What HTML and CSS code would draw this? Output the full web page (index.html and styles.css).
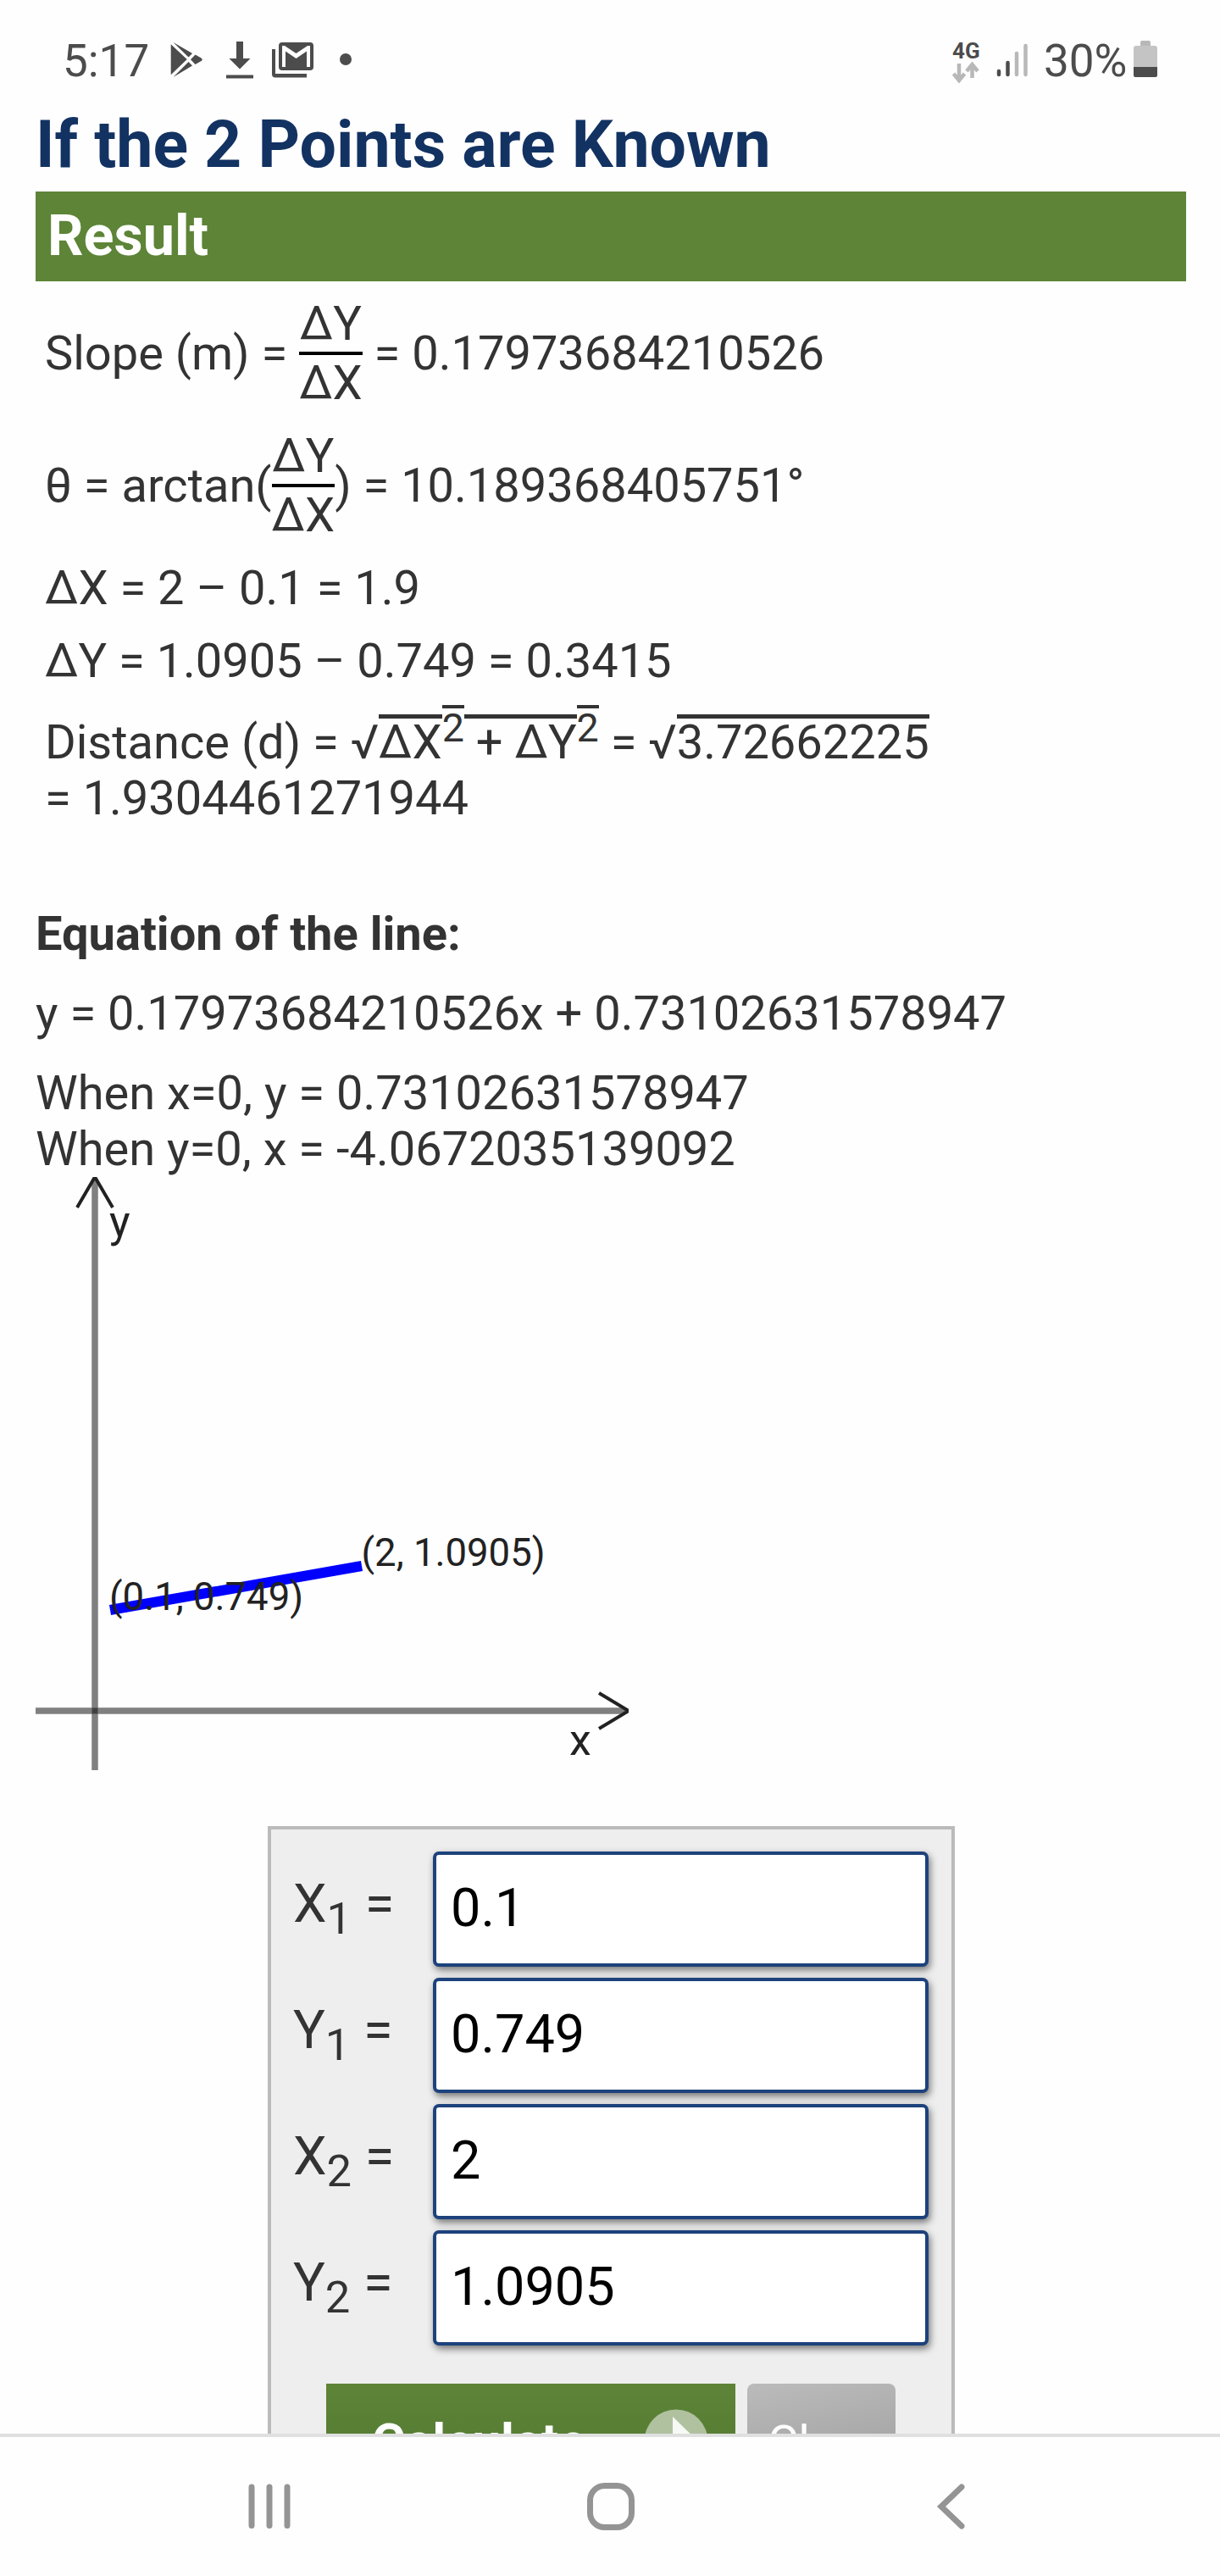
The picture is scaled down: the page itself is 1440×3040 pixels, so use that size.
FILE: index.html
```html
<!DOCTYPE html>
<html lang="en">
<head>
<meta charset="utf-8">
<title>Slope Calculator</title>
<link rel="stylesheet" href="styles.css">
</head>
<body>
<div class="screen">
  <header class="status">
    <div class="status-left">
      <span class="clock">5:17</span>
      <svg class="notif" width="230" height="60" viewBox="0 0 230 60" fill="#4c4c4c">
        <path d="M11.700 11.300V47.300L30.700 29zM14.500 9L32.500 26.500L37 22zM14.500 50L32.500 32L37 36.500zM40.500 23.500L47.500 27.500Q50 29.300 47.500 31L40.500 35L35 29.300z"/>
        <path d="M89 8h8v20h8.500L93 40.500 80.500 28H89zM77 47.500h32v4H77z"/>
        <path d="M131 17h4v29h37v4.500h-37q-4 0-4-4z"/>
        <path fill-rule="evenodd" d="M143 9h33q4 0 4 4v25q0 4-4 4h-33q-4 0-4-4v-25q0-4 4-4zM143 13v25h4V19.500l12.500 8.500L172 19.500V38h4V13h-3L159.500 22 146 13z"/>
        <circle cx="218" cy="29" r="7"/>
      </svg>
    </div>
    <div class="status-right">
      <div class="network">
        <span class="network-type">4G</span>
        <svg width="32" height="28" viewBox="0 0 32 28" fill="none" stroke="#b8b8b8" stroke-width="4.500"><path d="M8 3v18M1.500 15L8 23l6.500-8M23.500 20V5M17 12l6.500-8L30 12"/></svg>
      </div>
      <svg class="signal" width="38" height="42" viewBox="0 0 38 42" stroke-width="4.500" stroke-linecap="round"><path stroke="#4c4c4c" d="M3 34v4M13.500 24v14"/><path stroke="#b8b8b8" d="M24 13v25M34.500 4v34"/></svg>
      <span class="percent">30%</span>
      <svg class="battery" width="28" height="44" viewBox="0 0 28 44"><path fill="#b8b8b8" d="M8 7V2q0-2 2-2h8q2 0 2 2v5z"/><path fill="#c4c4c4" d="M0 9q0-3 3-3h22q3 0 3 3v23H0z"/><path fill="#4c4c4c" d="M0 31h28v10q0 2-2 2H2q-2 0-2-2z"/></svg>
    </div>
  </header>

  <main class="content">
    <h1 class="title">If the 2 Points are Known</h1>
    <h2 class="result-bar">Result</h2>

    <section class="steps">
      <div>Slope (m) = <span class="fraction"><span class="numerator">ΔY</span><span>ΔX</span></span> = 0.17973684210526</div>
      <div>θ = arctan(<span class="fraction"><span class="numerator">ΔY</span><span>ΔX</span></span>) = 10.189368405751°</div>
      <div>ΔX = 2 – 0.1 = 1.9</div>
      <div>ΔY = 1.0905 – 0.749 = 0.3415</div>
      <div class="distance">Distance (d) = √<span class="over">ΔX</span><sup class="over">2</sup><span class="over"> + ΔY</span><sup class="over">2</sup> = √<span class="over">3.72662225</span><br>= 1.9304461271944</div>
    </section>

    <section class="line-info">
      <p><b>Equation of the line:</b></p>
      <p>y = 0.17973684210526x + 0.73102631578947</p>
      <p>When x=0, y = 0.73102631578947<br>When y=0, x = -4.0672035139092</p>
    </section>

    <svg class="graph" width="700" height="700" viewBox="0 0 700 700">
      <g stroke="#808080" stroke-width="7.500"><path d="M70 4V700M0 630H696"/></g>
      <path d="M66.500 626.500h7v7h-7z" fill="#404040"/>
      <g stroke="#222" stroke-width="4" fill="none"><path d="M49 36L70 0l21 36M665 609l35 21-35 21"/></g>
      <path d="M88 511L385 459" stroke="#00f" stroke-width="12"/>
      <g class="graph-text">
        <text class="axis" x="87" y="70">y</text>
        <text class="axis" x="630" y="682">x</text>
        <text x="384.500" y="459">(2, 1.0905)</text>
        <text x="87" y="511">(0.1, 0.749)</text>
      </g>
    </svg>

    <form class="calculator">
      <label class="field"><span>X<sub>1</sub> =</span><input type="text" value="0.1"></label>
      <label class="field"><span>Y<sub>1</sub> =</span><input type="text" value="0.749"></label>
      <label class="field"><span>X<sub>2</sub> =</span><input type="text" value="2"></label>
      <label class="field"><span>Y<sub>2</sub> =</span><input type="text" value="1.0905"></label>
      <div class="actions">
        <button class="calculate" type="button">Calculate
          <svg width="76" height="76" viewBox="0 0 76 76"><circle cx="38" cy="38" r="37.500" fill="#b0c1a0"/><path d="M34 9l30 29-30 29z" fill="#f7f9f5"/></svg>
        </button>
        <button class="clear" type="button">Clear</button>
      </div>
    </form>
  </main>

  <nav class="navbar">
    <svg width="50" height="54" viewBox="0 0 50 54" stroke="#949494" stroke-width="7" stroke-linecap="round"><path d="M4 4v45.500M25 4v45.500M46 4v45.500"/></svg>
    <svg class="home" width="58" height="58" viewBox="0 0 58 58" fill="none" stroke="#949494" stroke-width="7"><rect x="4.500" y="4.500" width="49" height="49" rx="17"/></svg>
    <svg width="36" height="56" viewBox="0 0 36 56" fill="none" stroke="#949494" stroke-width="7" stroke-linecap="round"><path d="M30 5L6 28l24 23"/></svg>
  </nav>
</div>
</body>
</html>
```
FILE: styles.css
```css
* { box-sizing: border-box; }
body {
  margin: 0;
  background: #fefefe;
  color: #333;
  font: 56px/66px Roboto, "Liberation Sans", sans-serif;
}
.screen {
  display: flex;
  flex-direction: column;
  width: 1440px;
  height: 3040px;
  overflow: hidden;
}
.status {
  display: flex;
  flex: none;
  justify-content: space-between;
  height: 123px;
  padding: 41px 74px 0 74px;
  color: #4c4c4c;
  font-size: 53px;
  line-height: 62px;
}
.status-left, .status-right { display: flex; align-items: flex-start; }
.clock { width: 116px; }
.notif { flex: none; }
.network { display: flex; flex-direction: column; width: 48px; padding-top: 5px; }
.network-type { height: 28px; font-size: 26px; font-weight: 700; line-height: 28px; }
.network svg { margin-top: -2px; }
.signal { margin: 9px 18px 0 4px; }
.percent { width: 106px; white-space: nowrap; }
.battery { margin-top: 7px; }

.content {
  flex: 1;
  min-height: 0;
  padding: 0 40px 0 42px;
  overflow: hidden;
}
.title {
  height: 103px;
  margin: 0;
  color: #123262;
  font-size: 77px;
  line-height: 96px;
}
.result-bar {
  height: 106px;
  margin: 0;
  padding: 0 14px;
  background: #5d8437;
  color: #fff;
  font-size: 66.500px;
  line-height: 104px;
}
.steps {
  display: flex;
  flex-direction: column;
  gap: 20px;
  padding: 17px 11px 0;
}
.fraction {
  display: inline-block;
  text-align: center;
  vertical-align: -35px;
}
.fraction span { display: block; }
.numerator { border-bottom: 4px solid #000; }
.distance { padding-top: 10px; }
/* vinculum drawn along the top edge of each part of the radicand */
.over { background: linear-gradient(#333, #333) 0 0 / 100% 5px no-repeat; }
sup.over { background-size: 100% 4px; }
sup, sub { line-height: 0; }
.line-info { padding-top: 94px; }
.line-info p { margin: 0 0 28px; }
.line-info p:last-child { margin: 0; }
.graph { display: block; }
.graph-text { fill: #222; font-size: 45.500px; }
.axis { font-size: 52px; }

.calculator {
  width: 811px;
  height: 900px;
  margin: 66px 0 0 274px;
  padding: 26px 27px 26px 26px;
  border: 4px solid #bbb;
  background: #eee;
  font-size: 63px;
}
.field {
  display: flex;
  height: 136px;
  margin-bottom: 13px;
}
.field span { width: 165px; line-height: 123px; }
.field input {
  width: 585px;
  height: 136px;
  padding: 0 17px 3px;
  border: 4px solid #1d427c;
  border-radius: 7px;
  background: #fff;
  box-shadow: 2px 4px 8px rgba(0, 0, 0, .5);
  color: #000;
  font: 63px/125px Roboto, "Liberation Sans", sans-serif;
}
.actions {
  display: flex;
  gap: 14px;
  padding: 32px 0 0 39px;
}
.actions button {
  height: 136px;
  border: 0;
  color: #fff;
  font-family: Roboto, "Liberation Sans", sans-serif;
}
.calculate {
  display: flex;
  align-items: center;
  justify-content: space-between;
  width: 483px;
  padding: 0 32px 0 54px;
  background: linear-gradient(#5d8437, #527631);
  font-size: 60px;
  font-weight: 700;
}
.actions .clear {
  width: 175px;
  padding: 4px 0 0 2px;
  border-radius: 8px;
  background: linear-gradient(170deg, #bbb, #999);
  font-size: 56px;
}
.navbar {
  display: flex;
  flex: none;
  align-items: center;
  justify-content: space-between;
  height: 168px;
  padding: 0 299px 0 293px;
  border-top: 4px solid #e0e0e0;
}
.home { margin-right: 7px; }
```
